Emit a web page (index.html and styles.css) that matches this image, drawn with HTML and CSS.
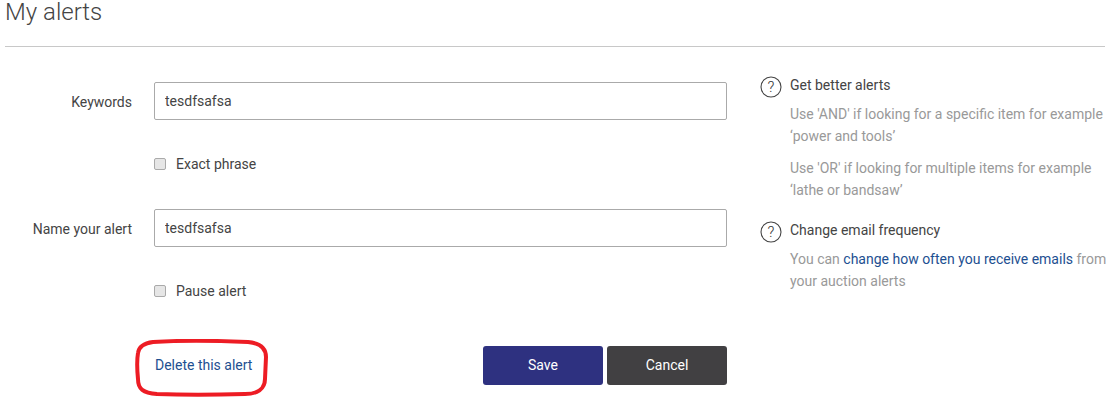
FILE: index.html
```html
<!DOCTYPE html>
<html lang="en">
<head>
<meta charset="utf-8">
<title>My alerts</title>
<link rel="stylesheet" href="styles.css">
</head>
<body>
<main class="page">
  <h1 class="title">My alerts</h1>
  <div class="content">
    <form class="form">
      <div class="row field">
        <label class="label" for="kw">Keywords</label>
        <input class="input" id="kw" type="text" value="tesdfsafsa">
      </div>
      <div class="row check">
        <label class="check-label"><input class="box" type="checkbox"><span>Exact phrase</span></label>
      </div>
      <div class="row field">
        <label class="label" for="nm">Name your alert</label>
        <input class="input" id="nm" type="text" value="tesdfsafsa">
      </div>
      <div class="row check">
        <label class="check-label"><input class="box" type="checkbox"><span>Pause alert</span></label>
      </div>
      <div class="row actions">
        <a class="delete" href="#">Delete this alert
          <svg class="circle" viewBox="0 0 134 58" width="134" height="58" aria-hidden="true"><path d="M18 3C50 1 90 2 113 3C125 4 131 9 131 18L130 40C130 50 122 55 110 55C80 56 45 56 22 55C8 54 3 50 3 40C2 30 2 20 3 14C4 7 10 4 18 3Z" fill="none" stroke="#ed1c24" stroke-width="4"/></svg>
        </a>
        <div class="buttons">
          <button class="btn save" type="button">Save</button>
          <button class="btn cancel" type="button">Cancel</button>
        </div>
      </div>
    </form>
    <aside class="aside">
      <section class="tip first">
        <svg class="help" viewBox="0 0 22 22" width="22" height="22" aria-hidden="true"><circle cx="11" cy="11" r="10" fill="none" stroke="#444" stroke-width="1.1"/><text x="11" y="16" text-anchor="middle" class="q">?</text></svg>
        <div class="tip-body">
          <h2 class="tip-title">Get better alerts</h2>
          <p class="tip-text">Use 'AND' if looking for a specific item for example<br>‘power and tools’</p>
          <p class="tip-text">Use 'OR' if looking for multiple items for example<br>‘lathe or bandsaw’</p>
        </div>
      </section>
      <section class="tip">
        <svg class="help" viewBox="0 0 22 22" width="22" height="22" aria-hidden="true"><circle cx="11" cy="11" r="10" fill="none" stroke="#444" stroke-width="1.1"/><text x="11" y="16" text-anchor="middle" class="q">?</text></svg>
        <div class="tip-body">
          <h2 class="tip-title">Change email frequency</h2>
          <p class="tip-text">You can <a class="link" href="#">change how often you receive emails</a> from<br>your auction alerts</p>
        </div>
      </section>
    </aside>
  </div>
</main>
</body>
</html>
```
FILE: styles.css
```css
* { box-sizing: border-box; }
html { margin: 0; background: #fff; }
body { margin: 0; font-family: Roboto, "Liberation Sans", sans-serif; font-size: 14px; color: #444; }
.page { height: 412px; padding: 0 12px 0 5px; }
.title {
  margin: 0;
  height: 47px;
  width: 1100px;
  font-size: 24px;
  line-height: 24px;
  font-weight: 300;
  color: #444;
  border-bottom: 1px solid #c8c8c8;
}
.content { display: flex; }
.form { flex: none; width: 722px; padding-top: 35px; }
.row { display: flex; align-items: center; }
.field { height: 38px; }
.label { width: 127px; padding-top: 2px; text-align: right; margin-right: 22px; flex: none; }
.input {
  flex: 1;
  height: 38px;
  padding: 0 10px;
  font: inherit;
  color: #444;
  border: 1px solid #aaa;
  border-radius: 2px;
  background: #fff;
  outline: none;
}
.check { height: 89px; padding: 0 0 2px 149px; }
.check-label { display: flex; align-items: center; gap: 10px; }
.box {
  appearance: none;
  width: 12px;
  height: 12px;
  margin: 0;
  border: 1px solid #aaa;
  border-radius: 2px;
  background: #e6e6e6;
}
.actions { justify-content: space-between; margin-top: 10px; padding-left: 150px; height: 39px; }
.delete { position: relative; margin-bottom: 2px; color: #1d4f91; text-decoration: none; }
.circle { position: absolute; left: -20px; top: -18px; }
.buttons { display: flex; gap: 4px; }
.btn {
  width: 120px;
  height: 39px;
  padding: 0 0 2px;
  border: 0;
  border-radius: 3px;
  color: #fff;
  font: 400 14px Roboto, "Liberation Sans", sans-serif;
}
.save { background: #2e3180; }
.cancel { background: #414042; }
.aside { flex: none; margin-left: 33px; width: 350px; padding-top: 27px; }
.tip { display: flex; gap: 8px; margin-top: 18px; }
.tip.first { margin-top: 0; }
.help { flex: none; margin-top: 2px; }
.q { font: 300 15px Roboto, "Liberation Sans", sans-serif; fill: #333; }
.tip-title { margin: 0 0 7px; font-size: 14px; line-height: 22px; font-weight: 400; color: #444; }
.tip-text { margin: 0 0 10px; line-height: 22px; color: #999; white-space: nowrap; }
.tip-text:last-child { margin-bottom: 0; }
.link { color: #1d4f91; text-decoration: none; }
```
